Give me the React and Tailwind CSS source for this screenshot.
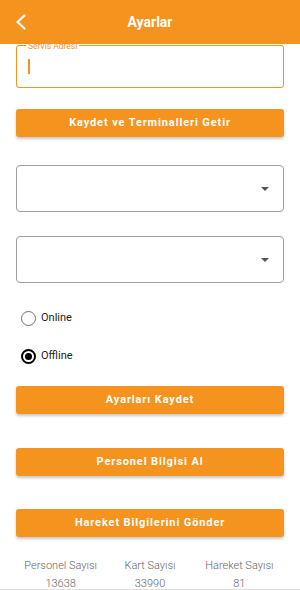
import React from "react";

const Btn = ({ children, className = "" }) => (
    <button
        className={`w-full h-[28px] rounded-[3px] bg-[#f5931f] text-white text-[11px] font-bold tracking-[0.08em] shadow-[0_2px_3px_rgba(0,0,0,0.22)] ${className}`}
    >
        {children}
    </button>
);

const Dropdown = ({ className = "" }) => (
    <div className={`relative h-[47px] rounded-[4px] border border-[#9e9e9e] bg-white ${className}`}>
        <div className="absolute right-[14px] top-[21px] w-0 h-0 border-l-[4.5px] border-r-[4.5px] border-t-[4.5px] border-l-transparent border-r-transparent border-t-[#555]"></div>
    </div>
);

const Radio = ({ checked, label, className = "" }) => (
    <div className={`flex items-center h-[20px] pl-[5px] ${className}`}>
        {checked ? (
            <div className="w-[15px] h-[15px] rounded-full border-2 border-black flex items-center justify-center">
                <div className="w-[7px] h-[7px] rounded-full bg-black"></div>
            </div>
        ) : (
            <div className="w-[15px] h-[15px] rounded-full border-[1.5px] border-[#6f6f6f]"></div>
        )}
        <span className="ml-[5px] text-[11px] text-[#222]">{label}</span>
    </div>
);

export default function App() {
    return (
        <div className="w-[300px] h-[590px] bg-white overflow-hidden relative" style={{ fontFamily: "Roboto, 'Noto Sans', sans-serif" }}>
            {/* Header */}
            <div className="relative z-10 h-[44px] bg-[#f5931f] flex items-center justify-center">
                <svg className="absolute left-[15px] top-[14px]" width="12" height="16" viewBox="0 0 12 16">
                    <path d="M9.5 1.5 L2.5 8 L9.5 14.5" fill="none" stroke="white" strokeWidth="2.2" strokeLinecap="round" strokeLinejoin="round" />
                </svg>
                <span className="text-white text-[14px] font-bold">Ayarlar</span>
            </div>

            <div className="px-4">
                {/* Servis Adresi input */}
                <div className="relative mt-[1px] h-[43px] rounded-[3px] border-[1.5px] border-[#f5931f]">
                    <span className="absolute left-[9px] top-[-5px] px-[2px] bg-white text-[8.5px] leading-[10px] text-[#f5931f]">Servis Adresi</span>
                    <div className="absolute left-[11px] top-[13px] w-[1.5px] h-[15px] bg-[#f5931f]"></div>
                </div>

                <Btn className="mt-[21px]">Kaydet ve Terminalleri Getir</Btn>

                <Dropdown className="mt-[28px]" />
                <Dropdown className="mt-[24px]" />

                <Radio label="Online" className="mt-[25px]" />
                <Radio label="Offline" checked className="mt-[18px]" />

                <Btn className="mt-[20px]">Ayarları Kaydet</Btn>
                <Btn className="mt-[34px]">Personel Bilgisi Al</Btn>
                <Btn className="mt-[33px]">Hareket Bilgilerini Gönder</Btn>

                {/* Stats */}
                <div className="grid grid-cols-3 mt-[21px] text-[11px] leading-[16px] text-[#666] font-light text-center">
                    <div>
                        <div>Personel Sayısı</div>
                        <div className="mt-[2px]">13638</div>
                    </div>
                    <div>
                        <div>Kart Sayısı</div>
                        <div className="mt-[2px]">33990</div>
                    </div>
                    <div>
                        <div>Hareket Sayısı</div>
                        <div className="mt-[2px]">81</div>
                    </div>
                </div>
            </div>
            <div className="absolute bottom-0 left-0 right-0 h-px bg-[#e0e0e0]"></div>
        </div>
    );
}
